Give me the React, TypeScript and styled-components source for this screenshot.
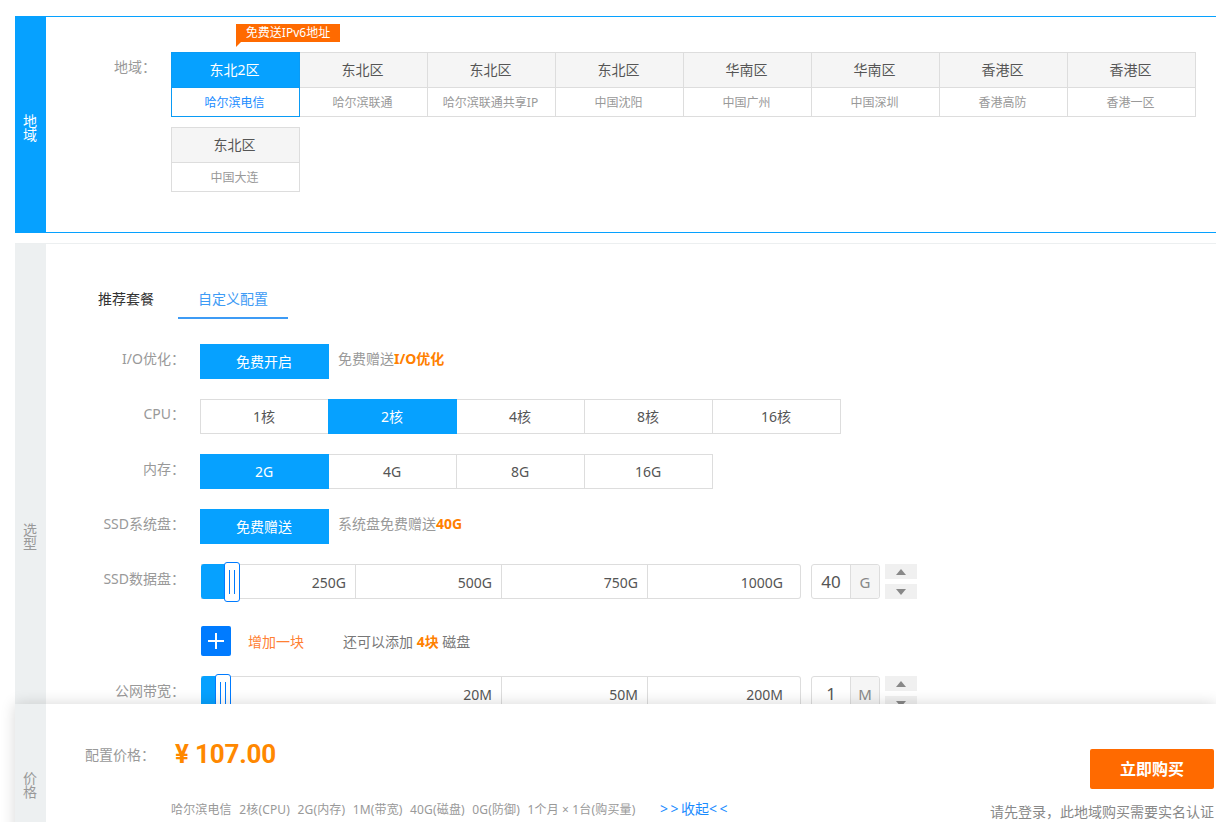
import React from "react";
import styled, { createGlobalStyle } from "styled-components";

const GlobalStyle = createGlobalStyle`
  html, body {
    margin: 0;
    padding: 0;
    background: #fff;
  }
  body {
    font-family: "Noto Sans", "Noto Sans CJK SC", sans-serif;
    font-size: 14px;
    color: #555;
  }
`;

const Page = styled.div`
  position: relative;
  width: 1216px;
  height: 822px;
  overflow: hidden;
  box-sizing: border-box;
  padding: 16px 0 0 15px;
`;

const Section = styled.section<{ $active?: boolean; $height: number }>`
  display: flex;
  height: ${(p) => p.$height}px;
  box-sizing: border-box;
  margin-bottom: 10px;
  border-top: 1px solid ${(p) => (p.$active ? "#06a1ff" : "#eceff0")};
  border-bottom: 1px solid ${(p) => (p.$active ? "#06a1ff" : "#eceff0")};
`;

const Side = styled.div<{ $active?: boolean; $shift?: number }>`
  flex: 0 0 31px;
  display: flex;
  align-items: center;
  justify-content: center;
  box-sizing: border-box;
  padding: ${(p) => p.$shift ?? 0}px 9px 0 8px;
  line-height: 14px;
  font-size: 14px;
  text-align: center;
  background: ${(p) => (p.$active ? "#06a1ff" : "#edf0f1")};
  color: ${(p) => (p.$active ? "#fff" : "#999")};
`;

const RegionBody = styled.div`
  flex: 1;
  display: flex;
  padding-top: 35px;
`;

const RegionLabel = styled.div`
  flex: 0 0 57px;
  margin-left: 68px;
  color: #999;
  line-height: 30px;
`;

const RegionGrid = styled.div`
  width: 1026px;
  display: flex;
  flex-wrap: wrap;
  align-content: flex-start;
  row-gap: 10px;
`;

const RegionCell = styled.div`
  position: relative;
  width: 128px;
  height: 65px;
  box-sizing: border-box;
  border: 1px solid #ddd;
  border-left-width: 0;
  &:nth-child(8n + 1) {
    width: 129px;
    border-left-width: 1px;
  }
  &:first-child {
    border-color: #0a9bf5;
  }
`;

const RegionHead = styled.div<{ $selected?: boolean }>`
  height: 35px;
  box-sizing: border-box;
  padding-right: 2px;
  line-height: 33px;
  text-align: center;
  border-bottom: 1px solid ${(p) => (p.$selected ? "#0a9bf5" : "#ddd")};
  background: ${(p) => (p.$selected ? "#06a1ff" : "#f5f5f5")};
  color: ${(p) => (p.$selected ? "#fff" : "#555")};
`;

const RegionSub = styled.div<{ $selected?: boolean }>`
  padding-right: 2px;
  line-height: 30px;
  font-size: 12px;
  text-align: center;
  color: ${(p) => (p.$selected ? "#1a8cff" : "#999")};
`;

const PromoTag = styled.div`
  position: absolute;
  left: 64px;
  top: -29px;
  width: 104px;
  height: 18px;
  line-height: 18px;
  font-size: 12px;
  text-align: center;
  color: #fff;
  background: #ff6a00;
  &::after {
    content: "";
    position: absolute;
    left: 0;
    top: 18px;
    border-style: solid;
    border-width: 5px 5px 0 0;
    border-color: #ff6a00 transparent transparent transparent;
  }
`;

const ConfigBody = styled.div`
  flex: 1;
  padding-top: 35px;
`;

const Tabs = styled.div`
  display: flex;
  padding-left: 32px;
  margin-bottom: 25px;
`;

const Tab = styled.div<{ $active?: boolean }>`
  height: 40px;
  box-sizing: border-box;
  line-height: 39px;
  font-size: 14px;
  padding: 0 20px;
  margin-right: ${(p) => (p.$active ? 0 : 4)}px;
  min-width: ${(p) => (p.$active ? 110 : 96)}px;
  text-align: center;
  color: ${(p) => (p.$active ? "#3d9bf5" : "#333")};
  border-bottom: ${(p) => (p.$active ? "2px solid #3d9bf5" : "none")};
`;

const Row = styled.div<{ $top?: number }>`
  display: flex;
  margin-top: ${(p) => p.$top ?? 20}px;
`;

const RowLabel = styled.div`
  flex: 0 0 139px;
  margin-right: 15px;
  text-align: right;
  line-height: 30px;
  color: #999;
`;

const OptionGroup = styled.div`
  display: flex;
`;

const Option = styled.div<{ $selected?: boolean }>`
  position: relative;
  width: 128px;
  height: 35px;
  box-sizing: border-box;
  padding-right: 1px;
  line-height: 33px;
  text-align: center;
  border: 1px solid ${(p) => (p.$selected ? "#06a1ff" : "#ddd")};
  border-left-width: 0;
  background: ${(p) => (p.$selected ? "#06a1ff" : "#fff")};
  color: ${(p) => (p.$selected ? "#fff" : "#555")};
  box-shadow: ${(p) => (p.$selected ? "-1px 0 0 #06a1ff" : "none")};
  &:first-child {
    width: 129px;
    border-left-width: 1px;
    box-shadow: none;
  }
`;

const Hint = styled.div`
  margin-left: 9px;
  line-height: 30px;
  font-size: 14px;
  color: #999;
`;

const Strong = styled.b`
  color: #ff8000;
`;

const SliderTrack = styled.div`
  position: relative;
  display: flex;
  margin-left: 1px;
  width: 600px;
  height: 35px;
`;

const SliderFill = styled.div<{ $width: number }>`
  position: absolute;
  left: 0;
  top: 0;
  width: ${(p) => p.$width}px;
  height: 35px;
  background: #06a1ff;
  border-radius: 3px 0 0 3px;
`;

const SliderHandle = styled.div<{ $left: number }>`
  position: absolute;
  left: ${(p) => p.$left}px;
  top: -2px;
  width: 16px;
  height: 40px;
  box-sizing: border-box;
  display: flex;
  align-items: center;
  justify-content: center;
  gap: 4px;
  background: #fff;
  border: 1px solid #007bff;
  border-radius: 3px;
  &::before,
  &::after {
    content: "";
    width: 1px;
    height: 24px;
    background: #007bff;
  }
`;

const Segment = styled.div<{ $width: number; $last?: boolean }>`
  width: ${(p) => p.$width}px;
  height: 35px;
  box-sizing: border-box;
  padding-right: ${(p) => (p.$last ? 17 : 9)}px;
  text-align: right;
  line-height: 35px;
  border: 1px solid #ddd;
  border-left: none;
  border-radius: ${(p) => (p.$last ? "0 3px 3px 0" : "0")};
`;

const NumberBox = styled.div`
  display: flex;
  margin-left: 10px;
  width: 69px;
  height: 35px;
  box-sizing: border-box;
  border: 1px solid #ddd;
  border-radius: 3px;
`;

const NumberValue = styled.div`
  flex: 1;
  text-align: center;
  line-height: 33px;
  font-size: 17px;
`;

const NumberUnit = styled.div`
  flex: 0 0 28px;
  text-align: center;
  line-height: 35px;
  font-size: 15px;
  color: #888;
  background: #f5f5f5;
  border-left: 1px solid #ddd;
  border-radius: 0 3px 3px 0;
`;

const Spinner = styled.div`
  display: flex;
  flex-direction: column;
  gap: 5px;
  margin-left: 5px;
`;

const SpinButton = styled.div<{ $down?: boolean }>`
  width: 32px;
  height: 15px;
  display: flex;
  align-items: center;
  justify-content: center;
  background: #f0f0f0;
  &::after {
    content: "";
    border-left: 5px solid transparent;
    border-right: 5px solid transparent;
    ${(p) =>
      p.$down
        ? "border-top: 6px solid #888;"
        : "border-bottom: 6px solid #888;"}
  }
`;

const AddRow = styled.div`
  display: flex;
  align-items: center;
  margin: 27px 0 0 155px;
  font-size: 14px;
`;

const AddButton = styled.div`
  width: 30px;
  height: 30px;
  display: flex;
  align-items: center;
  justify-content: center;
  background: #007bff;
  border-radius: 2px;
`;

const AddText = styled.span`
  margin: 0 39px 0 17px;
  color: #ff8033;
`;

const AddHint = styled.span`
  color: #777;
  white-space: pre;
`;

const Footer = styled.footer`
  position: absolute;
  left: 15px;
  right: 0;
  top: 704px;
  height: 162px;
  display: flex;
  background: #fff;
  box-shadow: 0 0 14px rgba(0, 0, 0, 0.16);
`;

const FooterMain = styled.div`
  flex: 1;
  padding: 30px 0 0 39px;
`;

const PriceRow = styled.div`
  display: flex;
  align-items: center;
  height: 40px;
`;

const PriceLabel = styled.div`
  flex: 0 0 90px;
  color: #999;
`;

const Price = styled.div`
  font-family: Roboto, "Noto Sans CJK SC", sans-serif;
  font-size: 26px;
  font-weight: 700;
  letter-spacing: -0.2px;
  color: #ff8800;
  white-space: pre;
`;

const Summary = styled.div`
  display: flex;
  align-items: center;
  margin: 26px 0 0 86px;
  font-size: 12px;
  color: #999;
  white-space: pre;
`;

const SummaryItem = styled.span`
  margin-right: 7.5px;
  letter-spacing: 0.15px;
`;

const Collapse = styled.span`
  margin: -2px 0 0 17px;
  font-size: 14px;
  color: #1a8cff;
`;

const Chevrons = styled.span`
  letter-spacing: 2.5px;
`;

const FooterAside = styled.div`
  display: flex;
  flex-direction: column;
  align-items: flex-end;
  padding: 45px 2px 0 0;
`;

const BuyButton = styled.div`
  width: 124px;
  height: 40px;
  line-height: 40px;
  text-align: center;
  font-size: 16px;
  font-weight: 700;
  color: #fff;
  background: #ff6a00;
  border-radius: 2px;
`;

const Notice = styled.div`
  margin-top: 14px;
  font-size: 14px;
  line-height: 18px;
  color: #888;
`;

const regions = [
  { area: "东北2区", city: "哈尔滨电信" },
  { area: "东北区", city: "哈尔滨联通" },
  { area: "东北区", city: "哈尔滨联通共享IP" },
  { area: "东北区", city: "中国沈阳" },
  { area: "华南区", city: "中国广州" },
  { area: "华南区", city: "中国深圳" },
  { area: "香港区", city: "香港高防" },
  { area: "香港区", city: "香港一区" },
  { area: "东北区", city: "中国大连" },
];

const cpuOptions = ["1核", "2核", "4核", "8核", "16核"];
const memoryOptions = ["2G", "4G", "8G", "16G"];
const summaryItems = [
  "哈尔滨电信",
  "2核(CPU)",
  "2G(内存)",
  "1M(带宽)",
  "40G(磁盘)",
  "0G(防御)",
  "1个月 × 1台(购买量)",
];

interface ISegment {
  width: number;
  label: string;
}

const diskSegments: ISegment[] = [
  { width: 155, label: "250G" },
  { width: 146, label: "500G" },
  { width: 146, label: "750G" },
  { width: 153, label: "1000G" },
];

const bandwidthSegments: ISegment[] = [
  { width: 301, label: "20M" },
  { width: 146, label: "50M" },
  { width: 153, label: "200M" },
];

interface ISliderRow {
  label: string;
  segments: ISegment[];
  fill: number;
  handle: number;
  value: string;
  unit: string;
  top?: number;
}

const SliderRow = ({ label, segments, fill, handle, value, unit, top }: ISliderRow): JSX.Element => (
  <Row $top={top}>
    <RowLabel>{label}</RowLabel>
    <SliderTrack>
      {segments.map((segment, index) => (
        <Segment key={segment.label} $width={segment.width} $last={index === segments.length - 1}>
          {segment.label}
        </Segment>
      ))}
      <SliderFill $width={fill} />
      <SliderHandle $left={handle} />
    </SliderTrack>
    <NumberBox>
      <NumberValue>{value}</NumberValue>
      <NumberUnit>{unit}</NumberUnit>
    </NumberBox>
    <Spinner>
      <SpinButton />
      <SpinButton $down />
    </Spinner>
  </Row>
);

const App = (): JSX.Element => {
  return (
    <Page>
      <GlobalStyle />
      <Section $active $height={217}>
        <Side $active $shift={6}>地域</Side>
        <RegionBody>
          <RegionLabel>地域：</RegionLabel>
          <RegionGrid>
            {regions.map((region, index) => (
              <RegionCell key={region.city}>
                {index === 0 && <PromoTag>免费送IPv6地址</PromoTag>}
                <RegionHead $selected={index === 0}>{region.area}</RegionHead>
                <RegionSub $selected={index === 0}>{region.city}</RegionSub>
              </RegionCell>
            ))}
          </RegionGrid>
        </RegionBody>
      </Section>

      <Section $height={584}>
        <Side $shift={4}>选型</Side>
        <ConfigBody>
          <Tabs>
            <Tab>推荐套餐</Tab>
            <Tab $active>自定义配置</Tab>
          </Tabs>
          <Row $top={0}>
            <RowLabel>I/O优化：</RowLabel>
            <OptionGroup>
              <Option $selected>免费开启</Option>
            </OptionGroup>
            <Hint>
              免费赠送<Strong>I/O优化</Strong>
            </Hint>
          </Row>
          <Row>
            <RowLabel>CPU：</RowLabel>
            <OptionGroup>
              {cpuOptions.map((option) => (
                <Option key={option} $selected={option === "2核"}>
                  {option}
                </Option>
              ))}
            </OptionGroup>
          </Row>
          <Row>
            <RowLabel>内存：</RowLabel>
            <OptionGroup>
              {memoryOptions.map((option) => (
                <Option key={option} $selected={option === "2G"}>
                  {option}
                </Option>
              ))}
            </OptionGroup>
          </Row>
          <Row>
            <RowLabel>SSD系统盘：</RowLabel>
            <OptionGroup>
              <Option $selected>免费赠送</Option>
            </OptionGroup>
            <Hint>
              系统盘免费赠送<Strong>40G</Strong>
            </Hint>
          </Row>
          <SliderRow label="SSD数据盘：" segments={diskSegments} fill={24} handle={23} value="40" unit="G" />
          <AddRow>
            <AddButton>
              <svg width="18" height="18" viewBox="0 0 18 18">
                <path d="M9 1v16M1 9h16" stroke="#fff" strokeWidth="2" />
              </svg>
            </AddButton>
            <AddText>增加一块</AddText>
            <AddHint>
              还可以添加 <Strong>4块</Strong> 磁盘
            </AddHint>
          </AddRow>
          <SliderRow label="公网带宽：" segments={bandwidthSegments} fill={15} handle={14} value="1" unit="M" />
        </ConfigBody>
      </Section>

      <Footer>
        <Side>价格</Side>
        <FooterMain>
          <PriceRow>
            <PriceLabel>配置价格：</PriceLabel>
            <Price>¥ 107.00</Price>
          </PriceRow>
          <Summary>
            {summaryItems.map((item) => (
              <SummaryItem key={item}>{item}</SummaryItem>
            ))}
            <Collapse>
              <Chevrons>{">>"}</Chevrons>收起<Chevrons>{"<<"}</Chevrons>
            </Collapse>
          </Summary>
        </FooterMain>
        <FooterAside>
          <BuyButton>立即购买</BuyButton>
          <Notice>请先登录，此地域购买需要实名认证</Notice>
        </FooterAside>
      </Footer>
    </Page>
  );
};

export default App;
